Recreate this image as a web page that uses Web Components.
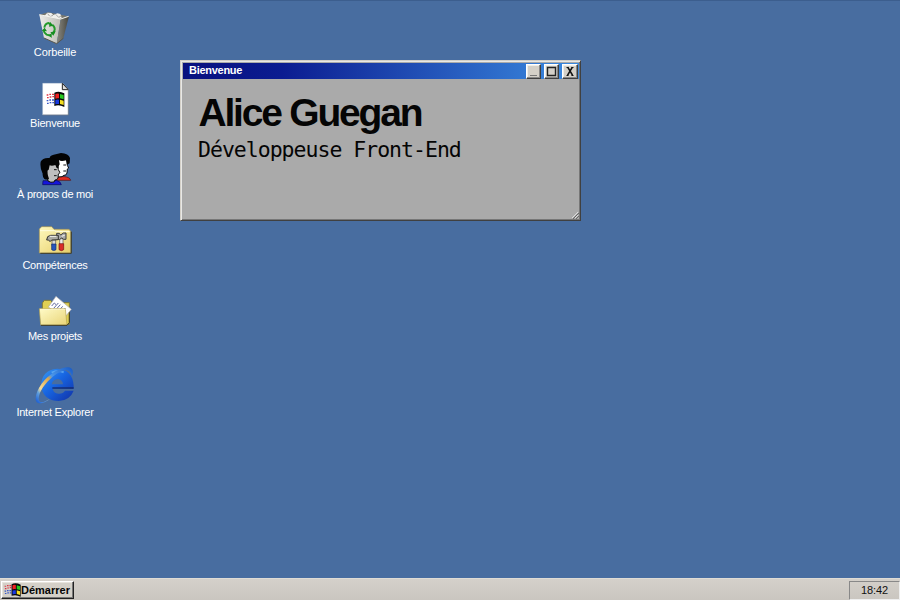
<!DOCTYPE html>
<html lang="fr"><head><meta charset="utf-8"><title>Alice Guegan</title>
<style>html,body{margin:0;height:100%;overflow:hidden}body{font-family:"Liberation Sans",Arial,sans-serif}</style></head>
<body>
<desk-top>
<desk-icon icon="bin" style="--sp:-.12px">Corbeille</desk-icon>
<desk-icon icon="page">Bienvenue</desk-icon>
<desk-icon icon="people" style="--sp:-.28px">À propos de moi</desk-icon>
<desk-icon icon="tools">Compétences</desk-icon>
<desk-icon icon="folder">Mes projets</desk-icon>
<desk-icon icon="ie">Internet Explorer</desk-icon>
<desk-window slot="window" heading="Bienvenue"><welcome-card></welcome-card></desk-window>
<task-bar slot="bar"></task-bar>
</desk-top>
<script>
const flag = `<g>
<g fill="#e03040"><path d="M110 61h5v4h-5zM118 59h5v4h-5zM126 59h6v4h-6zM111 69h5v4h-5zM119 67h5v4h-5zM127 66h5v4h-5z"/></g>
<g fill="#3656c8"><path d="M110 78h5v4h-5zM118 76h5v4h-5zM126 76h6v4h-6zM111 86h5v4h-5zM119 84h5v4h-5zM127 84h5v4h-5z"/></g>
<path d="M133 56q14-7 30 2v41q-16-9-30-3z" fill="#080808"/>
<path d="M136 60q5-3 11-1v14q-6-1-11 1z" fill="#ef2020"/><path d="M150 60l11 3v13l-11-3z" fill="#28c820"/>
<path d="M136 78q5-2 11-1v13q-6-1-11 1z" fill="#1839e0"/><path d="M150 77l11 3v13l-11-3z" fill="#f4df20"/></g>`;
const art = {
bin:`<svg width="48" height="36" viewBox="63 30 144 108"><defs><linearGradient id="b"><stop stop-color="#ededea"/><stop offset="1" stop-color="#bdbdb6"/></linearGradient><linearGradient id="s"><stop stop-color="#8b8a82"/><stop offset="1" stop-color="#45453e"/></linearGradient></defs>
<path d="M88 44l27-7 60 12-25 10z" fill="#77776f"/><path d="M103 48l9-10 12 1 6 6 12-5 9 2 4 12-15 6z" fill="#f0f0ed"/><path d="M113 41l7 9 9-4M137 43l9 9 8-4" stroke="#a7a7a3" stroke-width="3" fill="none"/>
<path d="M88 44l64 13-12 74-38-17z" fill="url(#b)"/><path d="M152 57l25-8-17 66-20 16z" fill="url(#s)"/><path d="M88 44l64 13 24-8" fill="none" stroke="#f5f5ef" stroke-width="3"/><path d="M102 114l38 17 20-16" fill="none" stroke="#55544c" stroke-width="3"/>
<g fill="none" stroke="#239a2b" stroke-width="6"><path d="M103 83q2-12 12-14l7 4M127 74q10 9 6 19l-3 6M123 107l-13-3q-8-5-9-13"/></g><path d="M120 65l10 12-13 3zM137 94l-7 13-9-10zM95 92l9-9 7 11zM125 100v14l-9-8z" fill="#168d21"/></svg>`,
page:`<svg width="48" height="36" viewBox="63 21 144 108"><path d="M98 28h60l17 18v77H98z" fill="#fff" stroke="#c9d2dc" stroke-width="1"/><path d="M157 28v19h18z" fill="#dedede" stroke="#222" stroke-width="3"/><path d="M175 46v77H98" fill="none" stroke="#4c5c6e" stroke-width="2"/>${flag}</svg>`,
people:`<svg width="48" height="36" viewBox="63 21 144 108"><path d="M137 94l14 1 11 0q18 1 20 11H140z" fill="#e02b20" stroke="#501010" stroke-width="2"/><path d="M142 42l26-2 3 11 1 10 4 8-4 3-1 12q-2 8-9 7l-6 4q-10 2-20-1z" fill="#fff" stroke="#080808" stroke-width="3"/><path d="M119 43q-3-10 12-14l22-5q23 1 27 15l-1 16-8 4-2-13q-17 5-22-1l2 13-5 9-20-9z" fill="#030303"/><path d="M160 60h8M160 78h8" stroke="#111" stroke-width="3"/>
<path d="M99 107h20l20-1q14 4 15 13H98z" fill="#1515dc" stroke="#080850" stroke-width="2"/><path d="M111 59l29-2 4 11 1 6 5 9-5 4-1 12q-2 7-9 6l-3 6q-10 3-18-3l-4-22z" fill="#bebebe" stroke="#080808" stroke-width="3"/><path d="M92 50q5-10 22-11 26-1 31 16l1 15-6-1-4-9q-10 4-17 1l-3 13-4 3 1 12 4 12q-6 5-14 1-6-7-5-16-9-18-6-36z" fill="#030303"/><path d="M132 74h8M132 92h8" stroke="#111" stroke-width="3"/></svg>`,
tools:`<svg width="48" height="36" viewBox="63 21 144 108"><defs><linearGradient id="f" x2="1" y2="1"><stop stop-color="#fff9be"/><stop offset="1" stop-color="#e6cd67"/></linearGradient></defs><path d="M88 39l7-7h30l7 8h45l5 6v65H88z" fill="url(#f)" stroke="#a7944f" stroke-width="2"/><path d="M90 44h43l6 3h40" stroke="#fffde0" stroke-width="3" fill="none"/><path d="M91 112h93V47" fill="none" stroke="#3f3b27" stroke-width="3"/>
<path d="M149 68h10v22h-10z" fill="#eeeeea" stroke="#555" stroke-width="2"/><path d="M140 52h8l4 5 8-6h8v19h-7l-6-4-7 5-8-4z" fill="#aaa" stroke="#41413e" stroke-width="3"/><path d="M147 83h14v18q-6 6-14 0z" fill="#d92d28" stroke="#711" stroke-width="2"/><path d="M126 72h11v17h-11z" fill="#d8d8d2" stroke="#55554f" stroke-width="2"/><path d="M110 72q0-13 12-14h23v13l-20 1-5 5-4-5z" fill="#aaa9a3" stroke="#34332f" stroke-width="3"/><path d="M119 61h20M155 61l9-3" stroke="#f4f4ef" stroke-width="3"/><path d="M125 84h13v17q-7 5-13 0z" fill="#2855bb" stroke="#142d70" stroke-width="2"/></svg>`,
folder:`<svg width="48" height="36" viewBox="63 24 144 108"><defs><linearGradient id="g" x2="1" y2="1"><stop stop-color="#fffbc8"/><stop offset="1" stop-color="#e9d477"/></linearGradient></defs><path d="M97 51l6-8h19l5 7h51v65H97z" fill="#dfcf54" stroke="#817a35" stroke-width="3"/><path d="M115 63l23-32 46 39-22 27z" fill="#fff" stroke="#a7a7aa" stroke-width="2"/><path d="M125 60l8-9 5 5M131 67l14-16M141 67l10-11M151 69l7-8M161 72l5-6" fill="none" stroke="#414a8a" stroke-width="2.5"/><path d="M88 68h78l5 49H92z" fill="url(#g)" stroke="#b4a14e" stroke-width="2"/><path d="M90 70h76" stroke="#fffbe0" stroke-width="2"/><path d="M93 118h78l7-8V79" fill="none" stroke="#3f3b27" stroke-width="3"/></svg>`,
ie:`<svg width="48" height="41" viewBox="63 21 144 123"><defs><linearGradient id="i" x1="0" y1="0" x2="1" y2="1"><stop stop-color="#3a9af2"/><stop offset=".45" stop-color="#1765e2"/><stop offset="1" stop-color="#1131a5"/></linearGradient><linearGradient id="r" gradientUnits="userSpaceOnUse" x1="82" y1="132" x2="185" y2="32"><stop stop-color="#2164d6"/><stop offset=".15" stop-color="#62a0dc"/><stop offset=".24" stop-color="#f5dc98"/><stop offset=".5" stop-color="#dba84e"/><stop offset=".6" stop-color="#4b96e8"/><stop offset="1" stop-color="#1d5fc8"/></linearGradient></defs>
<path fill-rule="evenodd" d="M93 84Q94 36 142 32 188 34 191 84v8H128q2 13 17 15 14 1 20-9h26q-11 29-45 31Q100 128 93 84zM125 79h34q-1-14-15-16-16 1-19 16z" fill="url(#i)"/><path d="M127 90h64" stroke="#14225a" stroke-width="3.5"/><path d="M125 44q18-9 36-1" stroke="#6fb8f5" stroke-width="6" fill="none" opacity=".65"/>
<path d="M186 57C197 26 174 18 136 40 103 60 79 94 77 120 76 143 99 139 120 123 99 135 87 136 86 122 87 102 104 76 130 55 157 34 181 27 186 57z" fill="url(#r)"/></svg>`};

class DeskTop extends HTMLElement{constructor(){super();this.attachShadow({mode:'open'}).innerHTML=`<style>
:host{display:grid;grid-template:578px 22px/110px 1fr;width:900px;height:600px;background:#486da0;box-shadow:inset 0 1px #3c5e8e}
nav{display:flex;flex-direction:column;gap:22px;padding-top:10px}main{padding:60px 0 0 70px}footer{grid-column:1/3;display:grid}
</style><nav><slot></slot></nav><main><slot name="window"></slot></main><footer><slot name="bar"></slot></footer>`}}
class DeskIcon extends HTMLElement{connectedCallback(){this.attachShadow({mode:'open'}).innerHTML=`<style>
:host{display:flex;flex-direction:column;align-items:center;color:#fff;font-size:11px;line-height:13px;white-space:nowrap;letter-spacing:var(--sp,-.24px)}svg{display:block;filter:blur(.25px)}
</style>${art[this.getAttribute('icon')]}<span><slot></slot></span>`}}
class DeskWindow extends HTMLElement{connectedCallback(){this.attachShadow({mode:'open'}).innerHTML=`<style>
:host{display:flex;flex-direction:column;box-sizing:border-box;width:401px;height:161px;background:#aaa;border:solid;border-width:1px;border-color:#d4d0c8 #404040 #404040 #d4d0c8;box-shadow:inset 1px 1px #e8e8e6,inset -1px -1px #777;padding:2px 1px 1px 2px;position:relative}
header{display:flex;align-items:center;height:16px;background:linear-gradient(90deg,#08107f,#0b1c91 25%,#3b8be0);color:#fff;font-weight:bold;font-size:11px;padding:0 1px 0 6px}
b{flex:1;letter-spacing:-.28px;padding-bottom:2px}.buttons{display:flex;gap:3px}
i{display:grid;box-sizing:border-box;width:15px;height:15px;background:#d4d0c8;border:1px solid;border-color:#fff #404040 #404040 #fff;box-shadow:inset -1px -1px #888,inset 1px 1px #efeee9}i:last-child{width:16px}
svg{display:block}.grip{position:absolute;right:1px;bottom:1px}
</style><header><b>${this.getAttribute('heading')}</b><div class="buttons">
<i><svg width="13" height="12"><path d="M3 10.5h7" stroke="#777"/></svg></i><i><svg width="13" height="12"><path d="M2.5 2.5h8v8h-8z" fill="none" stroke="#222" stroke-width="1.4"/></svg></i><i><svg width="13" height="12"><path d="M3.5 2.5h2M8.5 2.5h2M3.5 10.5h2M8.5 10.5h2" stroke="#111"/><path d="M4.7 2.2l4.8 8M9.4 2.2l-4.8 8" stroke="#111" stroke-width="1.6"/></svg></i></div></header><slot></slot>
<svg class="grip" width="8" height="8"><path d="M1 7l6-6M4 7l3-3" stroke="#ddd"/><path d="M2 8l6-6M5 8l3-3" stroke="#666"/></svg>`}}
class WelcomeCard extends HTMLElement{constructor(){super();this.attachShadow({mode:'open'}).innerHTML=`<style>
:host{display:block;padding:10px 0 0 16px;color:#050505}
h1{margin:0;font-size:39px;line-height:48px;letter-spacing:-2.2px;text-indent:-.5px;white-space:nowrap}
p{margin:0;font:21.5px/26px "DejaVu Sans Mono",monospace;letter-spacing:-1px;text-indent:-1px;white-space:nowrap}
</style><h1>Alice Guegan</h1><p>Développeuse Front-End</p>`}}
class TaskBar extends HTMLElement{constructor(){super();this.attachShadow({mode:'open'}).innerHTML=`<style>
:host{display:flex;justify-content:space-between;box-sizing:border-box;background:linear-gradient(#d4d0ca,#cac6c0);border-top:1px solid #dfdcd5;padding:2px 0 0 1px;font-size:11px;color:#111}
button{display:flex;align-items:center;box-sizing:border-box;width:73px;height:18px;padding:0 0 0 2px;border:1px solid;border-color:#fff #222 #222 #fff;box-shadow:inset -1px -1px #777,inset 1px 1px #e7e4dd;background:#d4d0c8;font:bold 11px "Liberation Sans",sans-serif;color:#050505;white-space:nowrap;margin:0}
svg{display:block;flex:none}time{box-sizing:border-box;width:51px;height:19px;line-height:17px;text-align:center;border:1px solid;border-color:#888 #eee #eee #888;letter-spacing:-.15px}
</style><button><svg width="17" height="14" viewBox="108 52 56 48" preserveAspectRatio="none">${flag}</svg>Démarrer</button><time>18:42</time>`}}
customElements.define('desk-top',DeskTop);customElements.define('desk-icon',DeskIcon);customElements.define('desk-window',DeskWindow);customElements.define('welcome-card',WelcomeCard);customElements.define('task-bar',TaskBar);
</script></body></html>
